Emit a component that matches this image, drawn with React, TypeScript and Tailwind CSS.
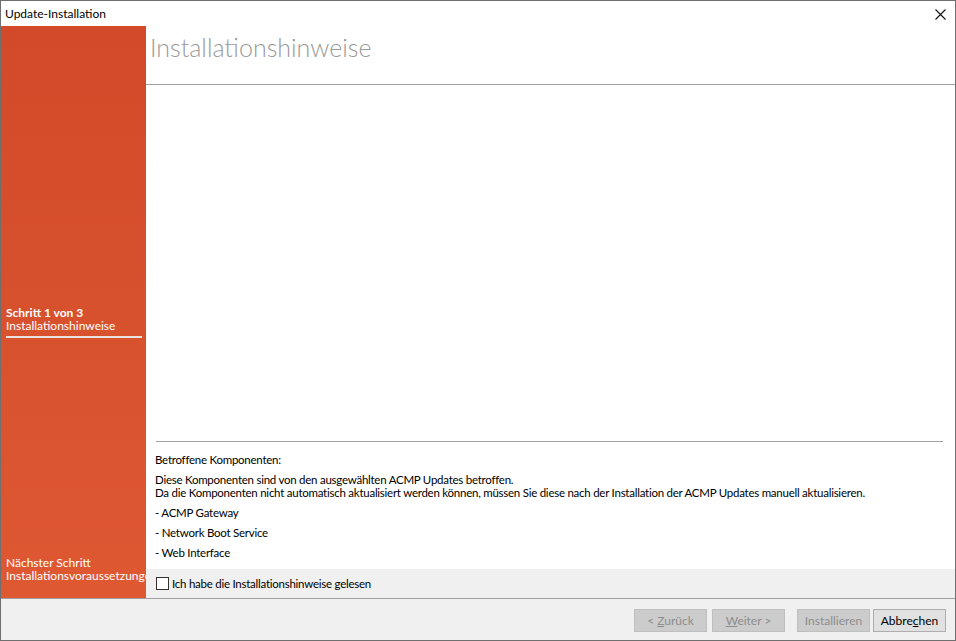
import React from "react";

const ui = { fontFamily: 'Lato, "Noto Sans", sans-serif' };

function Btn({ children, disabled }: { children: React.ReactNode; disabled?: boolean }) {
  return (
    <button
      className={
        disabled
          ? "h-[23px] w-[73px] border border-[#bfbfbf] bg-[#cccccc] text-[12px] text-[#8d8d8d]"
          : "h-[23px] w-[73px] border border-[#adadad] bg-[#e1e1e1] text-[12px] text-black"
      }
      style={ui}
    >
      {children}
    </button>
  );
}

export default function App() {
  return (
    <div
      className="w-[956px] h-[641px] border border-[#6f6f6f] bg-white flex flex-col overflow-hidden"
      style={ui}
    >
      {/* title bar */}
      <div className="h-[25px] flex items-center justify-between pl-[4px] pr-[9px] text-[12px] text-black">
        <span>Update-Installation</span>
        <svg width="11" height="11" viewBox="0 0 11 11" className="mt-[1px]">
          <path d="M0.5 0.5 L10.5 10.5 M10.5 0.5 L0.5 10.5" stroke="#111" strokeWidth="1.1" />
        </svg>
      </div>

      <div className="flex flex-1 min-h-0">
        {/* sidebar */}
        <aside className="w-[145px] bg-gradient-to-b from-[#d24a29] to-[#de5832] flex flex-col text-white text-[12px] leading-[13px] overflow-hidden">
          <div className="pl-[5px] pr-[4px] pt-[280px]">
            <div className="font-bold">Schritt 1 von 3</div>
            <div>Installationshinweise</div>
            <div className="mt-[4px] h-[2px] bg-[#e8e3e0]" />
          </div>
          <div className="flex-1" />
          <div className="pl-[5px] pb-[16px] whitespace-nowrap">
            <div>Nächster Schritt</div>
            <div>Installationsvoraussetzungen</div>
          </div>
        </aside>

        {/* content */}
        <main className="flex-1 flex flex-col min-w-0">
          <header className="h-[59px] border-b border-[#a0a0a0] pl-[4px] pt-[5px]">
            <h1 className="text-[25px] font-light text-[#9a9a9a] leading-[33px]">
              Installationshinweise
            </h1>
          </header>

          <section className="flex-1 flex flex-col justify-end pl-[9px] pr-[12px] pb-[10px] text-[11.5px] tracking-[-0.25px] text-black">
            <div className="h-px bg-[#a0a0a0] ml-px" />
            <div className="mt-[11px] leading-[13px]">Betroffene Komponenten:</div>
            <div className="mt-[7px] leading-[13px]">
              Diese Komponenten sind von den ausgewählten ACMP Updates betroffen.
              <br />
              Da die Komponenten nicht automatisch aktualisiert werden können, müssen Sie diese nach der Installation der ACMP Updates manuell aktualisieren.
            </div>
            <div className="mt-[7px] leading-[13px]">- ACMP Gateway</div>
            <div className="mt-[7px] leading-[13px]">- Network Boot Service</div>
            <div className="mt-[7px] leading-[13px]">- Web Interface</div>
          </section>

          <div className="h-[29px] bg-[#f0f0f0] flex items-center pl-[10px] text-[11.5px] tracking-[-0.25px] text-black">
            <span className="w-[13px] h-[13px] border border-[#333333] bg-white mr-[3px]" />
            <span>Ich habe die Installationshinweise gelesen</span>
          </div>
        </main>
      </div>

      {/* footer */}
      <footer className="h-[42px] border-t border-[#a0a0a0] bg-[#f0f0f0] flex items-start justify-end pt-[10px] pr-[9px]">
        <Btn disabled>
          &lt; <u>Z</u>urück
        </Btn>
        <div className="w-[5px]" />
        <Btn disabled>
          <u>W</u>eiter &gt;
        </Btn>
        <div className="w-[12px]" />
        <Btn disabled>Installieren</Btn>
        <div className="w-[3px]" />
        <Btn>
          Abbre<u>c</u>hen
        </Btn>
      </footer>
    </div>
  );
}
